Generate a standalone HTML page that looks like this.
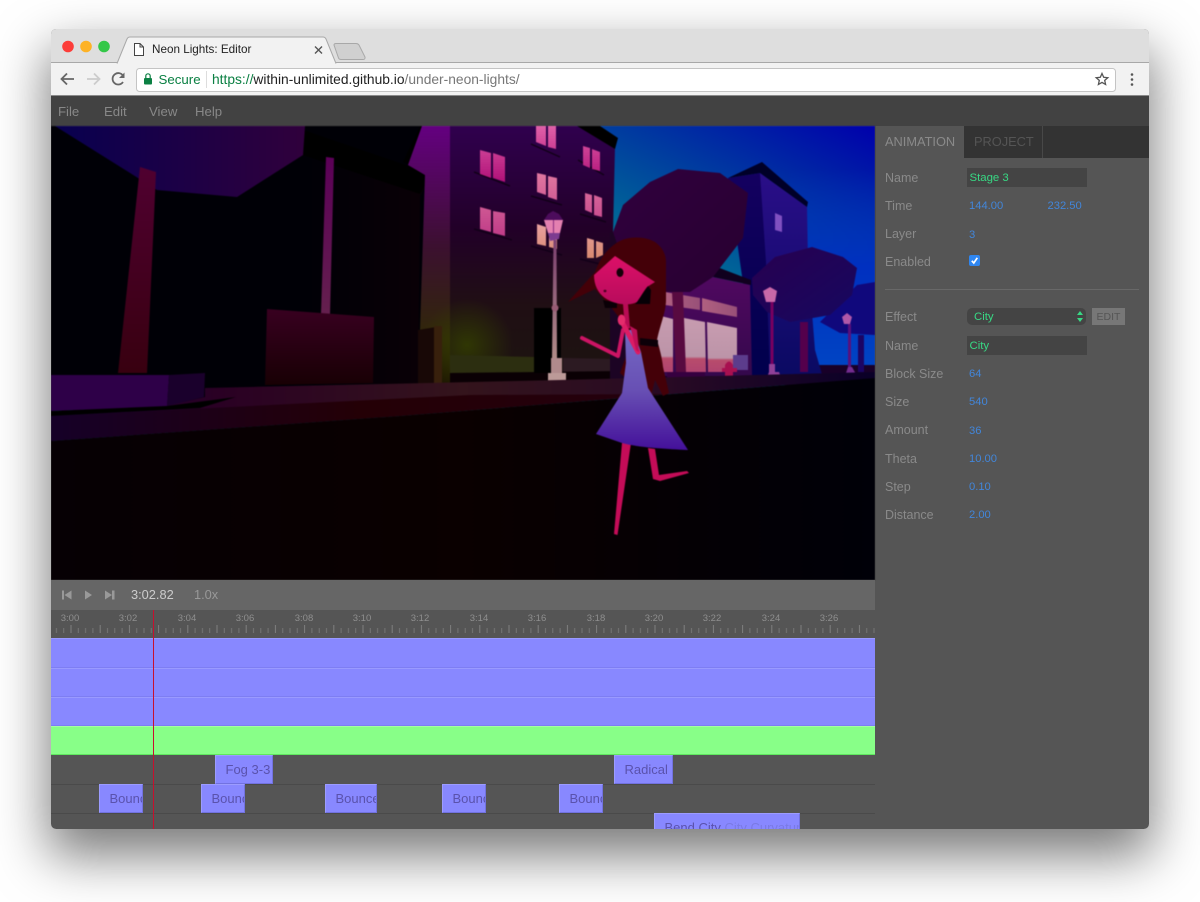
<!DOCTYPE html>
<html><head><meta charset="utf-8"><title>Neon Lights: Editor</title>
<style>
html,body{margin:0;padding:0;background:#fff;width:1200px;height:902px;overflow:hidden}
*{box-sizing:border-box}
body{font-family:"Liberation Sans",sans-serif}
#win{position:absolute;left:51px;top:29px;width:1098px;height:800px;border-radius:5px;box-shadow:0 24px 52px 3px rgba(0,0,0,.52)}
#clip{position:absolute;inset:0;border-radius:5px;overflow:hidden;background:#555}
.a{position:absolute;white-space:nowrap}
.lb{position:absolute;left:834px;color:#8a8a8a;font-size:12.5px;line-height:16px;margin-top:1px}
.v{position:absolute;color:#4286da;font-size:11.2px;line-height:14px;margin-top:1px}
.inp{position:absolute;left:916px;width:120px;height:19px;background:#444;color:#38d884;font-size:11.4px;line-height:21px;padding-left:2.500px}
.clip{position:absolute;background:#8888ff;border:1px solid;border-color:#9c9cff #7272e0 #7272e0 #9c9cff;color:#5a52ac;font-size:13px;line-height:27px;padding-left:9.500px;overflow:hidden;white-space:nowrap}
.t{position:absolute;left:0;width:824px;background:#8888ff;border-top:1px solid #9a9aff;border-bottom:1px solid #7e7ef2}
.rl{position:absolute;top:584px;width:30px;text-align:center;color:#8f8f8f;font-size:9.5px;line-height:12px}
</style></head><body>
<div id="win"><div id="clip">
<!-- tab strip -->
<div class="a" style="left:0;top:0;width:1098px;height:34px;background:#dedede;border-bottom:1px solid #a8a8a8"></div>
<div class="a" style="left:0;top:34px;width:1098px;height:33px;background:#f2f2f2;border-bottom:1px solid #8a8a8a"></div>
<svg class="a" style="left:0;top:0" width="1098" height="67" viewBox="51 29 1098 67">
<circle cx="68" cy="46.5" r="5.8" fill="#fc3d39"/><circle cx="86" cy="46.5" r="5.8" fill="#fdb225"/><circle cx="104" cy="46.5" r="5.8" fill="#33c748"/>
<path d="M117 63.5 127 39Q128 37 130 37H323Q325 37 326 39L336 63.5" fill="#f2f2f2" stroke="#a8a8a8"/>
<path d="M334 45Q334 43.500 336 43.500H356Q358 43.500 359 45L365 57Q365.500 59.500 363 59.500H341Q339 59.500 338.500 58Z" fill="#d0d0d0" stroke="#a8a8a8"/>
<path d="M134.500 43.500H140L143.500 47V55.500H134.500Z M140 43.500V47H143.500" fill="#fff" stroke="#444" stroke-width="1"/>
<path d="M315 46.500 322 53.500M322 46.500 315 53.500" stroke="#555" stroke-width="1.400"/>
<path d="M74 79H62M67 73.500 61.500 79 67 84.500" fill="none" stroke="#666" stroke-width="1.800"/>
<path d="M87 79H99M94 73.500 99.500 79 94 84.500" fill="none" stroke="#ccc" stroke-width="1.800"/>
<path d="M123 82A5.700 5.700 0 1 1 123.500 76.500" fill="none" stroke="#666" stroke-width="1.800"/><path d="M124.500 72.500V78H119Z" fill="#666"/>
<rect x="136.500" y="68.500" width="979" height="23" rx="3" fill="#fff" stroke="#c4c4c4"/>
<rect x="144" y="78" width="8" height="6.500" rx="1" fill="#0b8043"/><path d="M145.800 78V76A2.200 2.200 0 0 1 150.200 76V78" fill="none" stroke="#0b8043" stroke-width="1.200"/>
<rect x="206" y="71" width="1" height="17" fill="#ddd"/>
<path d="M1102 73.500 1103.700 77.300 1107.800 77.700 1104.700 80.400 1105.600 84.500 1102 82.400 1098.400 84.500 1099.300 80.400 1096.200 77.700 1100.300 77.300Z" fill="none" stroke="#555" stroke-width="1.300"/>
<circle cx="1132" cy="74.500" r="1.300" fill="#555"/><circle cx="1132" cy="79.500" r="1.300" fill="#555"/><circle cx="1132" cy="84.500" r="1.300" fill="#555"/>
</svg>
<div class="a" style="left:101px;top:13px;font-size:11.700px;line-height:16px;color:#222">Neon Lights: Editor</div>
<div class="a" style="left:107.500px;top:42px;font-size:13.300px;line-height:17px;color:#0b8043">Secure</div>
<div class="a" style="left:161px;top:42px;font-size:13.800px;line-height:17px;color:#777"><span style="color:#0b8043">https://</span><span style="color:#222">within-unlimited.github.io</span>/under-neon-lights/</div>
<!-- menu -->
<div class="a" style="left:0;top:67px;width:1098px;height:30px;background:#424242"></div>
<div class="a" style="left:7px;top:74px;font-size:13.200px;line-height:17px;color:#888">File</div>
<div class="a" style="left:53px;top:74px;font-size:13.200px;line-height:17px;color:#888">Edit</div>
<div class="a" style="left:98px;top:74px;font-size:13.200px;line-height:17px;color:#888">View</div>
<div class="a" style="left:144px;top:74px;font-size:13.200px;line-height:17px;color:#888">Help</div>
<!-- scene -->
<svg class="a" style="left:0;top:97px;filter:blur(.45px)" width="824" height="454" viewBox="51 126 824 454">
<defs>
<linearGradient id="sky" gradientUnits="userSpaceOnUse" x1="875" y1="126" x2="783" y2="311"><stop offset="0" stop-color="#0000ac"/><stop offset=".55" stop-color="#003aa0"/><stop offset="1" stop-color="#006a96"/></linearGradient>
<linearGradient id="sky2" x1="0" y1="0" x2="0" y2="1"><stop offset="0" stop-color="#0030c0" stop-opacity="0"/><stop offset=".45" stop-color="#0030c0"/><stop offset="1" stop-color="#0048c4"/></linearGradient>
<linearGradient id="can" x1="0" y1="0" x2="1" y2="0"><stop offset="0" stop-color="#080050"/><stop offset="1" stop-color="#30003c"/></linearGradient>
<linearGradient id="tr1" x1="0" y1="0" x2="0" y2="1"><stop offset="0" stop-color="#500030"/><stop offset="1" stop-color="#380010"/></linearGradient>
<linearGradient id="tr2" x1="0" y1="0" x2="0" y2="1"><stop offset="0" stop-color="#5c0058"/><stop offset="1" stop-color="#64204e"/></linearGradient>
<linearGradient id="bx" x1="0" y1="0" x2="0" y2="1"><stop offset="0" stop-color="#380020"/><stop offset="1" stop-color="#180004"/></linearGradient>
<linearGradient id="dk" x1="0" y1="0" x2="1" y2="0"><stop offset="0" stop-color="#000006"/><stop offset="1" stop-color="#0a0006"/></linearGradient>
<linearGradient id="side" gradientUnits="userSpaceOnUse" x1="51" y1="0" x2="875" y2="0"><stop offset="0" stop-color="#1c0040"/><stop offset=".2" stop-color="#2a0024"/><stop offset=".5" stop-color="#34141c"/><stop offset=".75" stop-color="#280a24"/><stop offset="1" stop-color="#0a0028"/></linearGradient>
<linearGradient id="band" gradientUnits="userSpaceOnUse" x1="51" y1="0" x2="670" y2="0"><stop offset="0" stop-color="#160028"/><stop offset=".5" stop-color="#240006"/><stop offset="1" stop-color="#24000e"/></linearGradient>
<linearGradient id="road" gradientUnits="userSpaceOnUse" x1="51" y1="0" x2="875" y2="0"><stop offset="0" stop-color="#060004"/><stop offset=".5" stop-color="#0a0000"/><stop offset="1" stop-color="#000008"/></linearGradient>
<linearGradient id="bl" x1="0" y1="0" x2="0" y2="1"><stop offset="0" stop-color="#640080"/><stop offset=".45" stop-color="#3c1030"/><stop offset=".8" stop-color="#302808"/><stop offset="1" stop-color="#1a1400"/></linearGradient>
<linearGradient id="bf" x1="0" y1="0" x2="0" y2="1"><stop offset="0" stop-color="#30004e"/><stop offset=".4" stop-color="#220028"/><stop offset=".7" stop-color="#200f14"/><stop offset="1" stop-color="#1c1410"/></linearGradient>
<linearGradient id="w1" x1="0" y1="0" x2="0" y2="1"><stop offset="0" stop-color="#e060a8"/><stop offset="1" stop-color="#b01078"/></linearGradient>
<linearGradient id="w2" x1="0" y1="0" x2="0" y2="1"><stop offset="0" stop-color="#e8a0a0"/><stop offset="1" stop-color="#d88a70"/></linearGradient>
<linearGradient id="w3" x1="0" y1="0" x2="0" y2="1"><stop offset="0" stop-color="#e078a0"/><stop offset="1" stop-color="#c03c88"/></linearGradient>
<radialGradient id="glow"><stop offset="0" stop-color="#344000" stop-opacity=".8"/><stop offset="1" stop-color="#344000" stop-opacity="0"/></radialGradient>
<linearGradient id="tree" x1="0" y1="0" x2="1" y2="1"><stop offset="0" stop-color="#30003e"/><stop offset="1" stop-color="#280030"/></linearGradient>
<linearGradient id="tree2" x1="0" y1="0" x2="1" y2="1"><stop offset="0" stop-color="#280050"/><stop offset="1" stop-color="#160860"/></linearGradient>
<linearGradient id="rb" x1="0" y1="0" x2="0" y2="1"><stop offset="0" stop-color="#2a0e88"/><stop offset="1" stop-color="#0a0a62"/></linearGradient>
<linearGradient id="rl" x1="0" y1="0" x2="0" y2="1"><stop offset="0" stop-color="#140060"/><stop offset="1" stop-color="#00004c"/></linearGradient>
<linearGradient id="shop" x1="0" y1="0" x2="0" y2="1"><stop offset="0" stop-color="#500860"/><stop offset="1" stop-color="#34084c"/></linearGradient>
<linearGradient id="sw" x1="0" y1="0" x2="0" y2="1"><stop offset="0" stop-color="#c89cb0"/><stop offset=".72" stop-color="#bc94a8"/><stop offset=".76" stop-color="#b84c6c"/><stop offset="1" stop-color="#b04470"/></linearGradient>
<linearGradient id="sw2" x1="0" y1="0" x2="1" y2="0"><stop offset="0" stop-color="#b06080"/><stop offset="1" stop-color="#985078"/></linearGradient>
<linearGradient id="pole" x1="0" y1="0" x2="0" y2="1"><stop offset="0" stop-color="#7c4070"/><stop offset="1" stop-color="#b08c88"/></linearGradient>
<linearGradient id="dress" x1="0" y1="0" x2="0" y2="1"><stop offset="0" stop-color="#7468c4"/><stop offset=".5" stop-color="#6850b4"/><stop offset="1" stop-color="#44109a"/></linearGradient>
<linearGradient id="skin" x1="0" y1="0" x2="0" y2="1"><stop offset="0" stop-color="#dc1068"/><stop offset="1" stop-color="#b80c5c"/></linearGradient>
</defs>
<rect x="51" y="126" width="824" height="454" fill="url(#sky)"/>
<rect x="790" y="170" width="85" height="215" fill="url(#sky2)"/>
<rect x="300" y="126" width="130" height="50" fill="#003ca4"/>
<!-- left dark building -->
<rect x="51" y="126" width="390" height="280" fill="#000006"/>
<path d="M303 130 426 172V184L420 196 418 385H303Z" fill="url(#dk)"/>
<path d="M303 130 426 172V184L420 194 303 155Z" fill="#000"/>
<path d="M55 126H305L303 155 237 197 157 190 138 178Z" fill="url(#can)"/>
<path d="M140 167 156 172 147 373H118Z" fill="url(#tr1)"/>
<path d="M326 157 334 158 330 314H321Z" fill="url(#tr2)"/>
<path d="M267 309 374 317 373 383 265 385Z" fill="url(#bx)"/>
<!-- main building -->
<path d="M403 162 420 126H429L410 165Z" fill="#000"/>
<path d="M422 126 408 165 425 175 418 392H450V126Z" fill="url(#bl)"/>
<path d="M450 126H577L615 147 613 232 620 372 450 382Z" fill="url(#bf)"/>
<path d="M577 126H600L618 138 615 149Z" fill="#000"/>
<ellipse cx="467" cy="345" rx="46" ry="46" fill="url(#glow)"/>
<path d="M450 355 535 357V373H450Z" fill="#2c2e10"/>
<path d="M563 358 622 359V372H563Z" fill="#2c1a22"/>
<path d="M450 373 620 371V392H450Z" fill="#0a0004"/>
<path d="M418 330 442 326V388H418Z" fill="#180806"/><path d="M434 326H442V388H434Z" fill="#38200c"/>
<path d="M534 308H561V373H534Z" fill="#000"/>
<g fill="none" stroke="#120018" stroke-width="1.500">
<path d="M474 172 510 186M531 144 560 157M578 160 604 175M531 196 562 205M580 214 606 222M474 229 512 240M531 246 562 255M580 259 600 264"/>
</g>
<path d="M480 150 491 153V178L480 174ZM493 153 505 157V182L493 178ZM536 126H546V146L536 142ZM548 126H556V149L548 147ZM583 146 590 148V168L583 165ZM592 149 600 152V171L592 169Z" fill="url(#w1)"/>
<path d="M537 173 546 175V195L537 192ZM548 176 557 178V200L548 197ZM585 193 592 195V213L585 210ZM594 195 602 198V217L594 215ZM480 207 491 210V232L480 229ZM493 211 505 213V236L493 233Z" fill="url(#w3)"/>
<path d="M537 224 546 227V246L537 244ZM549 228 557 230V249L549 247ZM587 238 594 240V258L587 258ZM596 241 603 243V255L596 258Z" fill="url(#w2)"/>
<!-- fill behind girl and shop -->
<path d="M610 232H670V385H610Z" fill="#1c0424"/>
<path d="M640 365H875V385H640Z" fill="#180028"/>
<!-- right building + trees behind -->
<path d="M728 178 760 173 775 262V378H740L744 290Z" fill="url(#rl)"/>
<path d="M760 173 807 207 808 262 815 350 823 378H770L766 262Z" fill="url(#rb)"/>
<path d="M728 178 762 162 808 202 807 207 760 173Z" fill="#000028"/>
<path d="M775 213 782 216V232L775 230Z" fill="#8050c0"/>
<path d="M820 322 857 285 875 282V335L840 333Z" fill="#10087c"/>
<rect x="858" y="335" width="6" height="37" fill="#1c0464"/>
<rect x="800" y="322" width="8" height="50" fill="#54004c"/>
<path d="M752 278 775 257 812 247 843 257 857 268 852 295 830 315 790 322 767 312 753 295Z" fill="url(#tree2)"/>
<!-- shop -->
<path d="M690 290 713 277 750 285 752 376 650 376 665 292Z" fill="url(#shop)"/>
<path d="M717 267 751 280V285L713 277Z" fill="#10001e"/>
<path d="M665 292 700 298V310L665 305Z" fill="url(#sw2)"/><path d="M702 298 737 307V317L702 311Z" fill="url(#sw2)"/>
<path d="M657 315 673 319V372H650Z" fill="url(#sw)"/><path d="M679 317 705 322 706 372H679Z" fill="url(#sw)"/><path d="M707 322 737 328V372H708Z" fill="url(#sw)"/>
<path d="M613 232 623 205 650 182 678 169 720 173 748 193 743 238 713 277 690 292 663 292 630 280Z" fill="url(#tree)"/>
<path d="M672 292H683L686 372H676Z" fill="#580a40"/>
<rect x="667" y="372" width="38" height="11" fill="#360040"/>
<rect x="733" y="355" width="15" height="15" fill="#5c3c8c"/>
<path d="M725 365Q729 358 733 365V368H737V372H733V382H725V372H722V368H725Z" fill="#a81050"/>
<!-- lamps -->
<path d="M553.500 240H556.500L557 358H552Z" fill="url(#pole)"/><circle cx="555" cy="308" r="3.500" fill="#985c74"/>
<path d="M551 358H562V373H551Z" fill="#b08a8c"/><path d="M548 373H566V389H548Z" fill="#bc9a98"/>
<path d="M544 220 548 214 553 211 559 214 563 220Z" fill="#4c0c5c"/><path d="M544 220H563L560 233H548Z" fill="#e480b0"/><path d="M553.500 220V233" stroke="#8a2c80"/><path d="M548 233H560L559 239 550 241Z" fill="#7c3c90"/>
<rect x="770.500" y="302" width="3" height="62" fill="#780060"/><path d="M769 364H775V372H779L782 380H766L769 372Z" fill="#904098"/>
<path d="M763 291 770 287 777 291 775 302H766Z" fill="#c868a8"/>
<rect x="848" y="324" width="3" height="44" fill="#58107c"/><path d="M848 367H852L857 376H845Z" fill="#742c90"/>
<path d="M842 317 847 313 852 317 850 324H844Z" fill="#b058a8"/>
<!-- ground -->
<path d="M205 388 560 380 875 372V378L660 395 400 416 51 441V412L170 405 205 397Z" fill="url(#side)"/>
<path d="M51 416 470 395 670 394 400 416 51 441Z" fill="url(#band)"/>
<path d="M51 441 400 416 660 395 875 378V580H51Z" fill="url(#road)"/>
<path d="M51 375H169L167 407 51 411Z" fill="#2e0048"/>
<path d="M169 375 205 373 204 397 167 406Z" fill="#1a002c"/>
<path d="M51 411 167 406 236 397 200 408 51 416Z" fill="#000"/>
<!-- girl -->
<path d="M568 302 595 272C600 258 608 248 618 242 628 236 645 236 655 242 662 247 666 254 666 262V300C666 312 660 325 657 340 660 350 662 358 663 367L669 393 663 396 655 380 650 400 620 373 632 340 625 325 610 306 595 289Z" fill="#440008"/>
<path d="M622 443H631L617.500 535 614 534Z" fill="#c40c58"/>
<path d="M648 448 655 449 659 475 687 471 689 473 660 481 653 479Z" fill="#c40c58"/>
<path d="M625 330 633 330 641 352 648 388 688 450C670 449 640 448 622 443L596 434 622 393 626 363Z" fill="url(#dress)"/>
<path d="M582 338 618 356 623 330" fill="none" stroke="#cc1464" stroke-width="4" stroke-linejoin="round" stroke-linecap="round"/>
<path d="M628 304 630 328 625 330 623 304Z" fill="#b80c54"/>
<path d="M622 322 638 352" stroke="#dc1c64" stroke-width="5" stroke-linecap="round"/>
<path d="M630 326 637 330 639 352 636 350Z" fill="#c01058"/>
<ellipse cx="621.500" cy="320" rx="3.800" ry="5.500" fill="#e42c6c"/>
<path d="M640 338 658 340V347L640 345Z" fill="#0c0008"/>
<path d="M603 300 617 303 617 308 605 308Z" fill="#0a0006"/>
<path d="M615 256 655 282 647 287C643 292 640 298 637 302 630 306 615 305 605 298 598 293 594 285 594 275Z" fill="url(#skin)"/>
<path d="M648 286 651 290 650 304H635L637 302Z" fill="#060006"/>
<ellipse cx="620" cy="272.500" rx="3.500" ry="4.500" fill="#150008"/>
<ellipse cx="605" cy="291" rx="1.500" ry="1.200" fill="#4a0020"/>
</svg>
<!-- right panel -->
<div class="a" style="left:824px;top:97px;width:1px;height:454px;background:#4a4a4a"></div>
<div class="a" style="left:825px;top:97px;width:273px;height:32px;background:#333"></div>
<div class="a" style="left:825px;top:97px;width:88px;height:32px;background:#555"></div>
<div class="a" style="left:991px;top:97px;width:1px;height:32px;background:#484848"></div>
<div class="a" style="left:834px;top:105px;font-size:12.800px;line-height:16px;color:#8a8a8a">ANIMATION</div>
<div class="a" style="left:923px;top:105px;font-size:12.800px;line-height:16px;color:#555">PROJECT</div>
<div class="lb" style="top:140px">Name</div><div class="inp" style="top:139px">Stage 3</div>
<div class="lb" style="top:168px">Time</div><div class="v" style="left:918px;top:168.500px">144.00</div><div class="v" style="left:996.500px;top:168.500px">232.50</div>
<div class="lb" style="top:196px">Layer</div><div class="v" style="left:918px;top:197.500px">3</div>
<div class="lb" style="top:224px">Enabled</div>
<svg class="a" style="left:918px;top:226px" width="12" height="12"><rect width="11" height="11" rx="2" fill="#2f86f0"/><path d="M2.800 5.800 4.800 8 8.300 2.800" fill="none" stroke="#fff" stroke-width="1.700"/></svg>
<div class="a" style="left:834px;top:260px;width:254px;height:1px;background:#686868"></div>
<div class="lb" style="top:279px">Effect</div>
<div class="a" style="left:916px;top:279px;width:119px;height:17px;border-radius:5px;background:#444;color:#38d884;font-size:11.400px;line-height:19px;padding-left:7px">City</div>
<svg class="a" style="left:1025px;top:282px" width="8" height="11"><path d="M4 0 7 4H1ZM4 11 1 7H7Z" fill="#38d884"/></svg>
<div class="a" style="left:1041px;top:279px;width:33px;height:17px;background:#777;color:#555;font-size:10.500px;line-height:19px;text-align:center">EDIT</div>
<div class="lb" style="top:308px">Name</div><div class="inp" style="top:307px">City</div>
<div class="lb" style="top:336px">Block Size</div><div class="v" style="left:918px;top:337px">64</div>
<div class="lb" style="top:364px">Size</div><div class="v" style="left:918px;top:365px">540</div>
<div class="lb" style="top:392px">Amount</div><div class="v" style="left:918px;top:394px">36</div>
<div class="lb" style="top:421px">Theta</div><div class="v" style="left:918px;top:422px">10.00</div>
<div class="lb" style="top:449px">Step</div><div class="v" style="left:918px;top:450px">0.10</div>
<div class="lb" style="top:477px">Distance</div><div class="v" style="left:918px;top:478px">2.00</div>
<!-- controls -->
<div class="a" style="left:0;top:551px;width:824px;height:30px;background:#666"></div>
<svg class="a" style="left:0;top:551px" width="80" height="30"><path d="M11 10.500H13V19.500H11ZM20.500 10.500V19.500L13.500 15Z" fill="#999"/><path d="M34 10.500 41 15 34 19.500Z" fill="#999"/><path d="M54 10.500 61 15 54 19.500ZM61 10.500H63.500V19.500H61Z" fill="#999"/></svg>
<div class="a" style="left:80px;top:558px;font-size:12.800px;line-height:16px;color:#ccc">3:02.82</div>
<div class="a" style="left:143px;top:558px;font-size:12.800px;line-height:16px;color:#999">1.0x</div>
<!-- ruler -->
<div class="a" style="left:0;top:581px;width:824px;height:28px;background:#555"></div>
<div class="rl" style="left:4px">3:00</div><div class="rl" style="left:62px">3:02</div><div class="rl" style="left:121px">3:04</div><div class="rl" style="left:179px">3:06</div><div class="rl" style="left:238px">3:08</div><div class="rl" style="left:296px">3:10</div><div class="rl" style="left:354px">3:12</div><div class="rl" style="left:413px">3:14</div><div class="rl" style="left:471px">3:16</div><div class="rl" style="left:530px">3:18</div><div class="rl" style="left:588px">3:20</div><div class="rl" style="left:646px">3:22</div><div class="rl" style="left:705px">3:24</div><div class="rl" style="left:763px">3:26</div>
<svg class="a" style="left:0;top:581px" width="824" height="28"><defs><pattern id="tk" patternUnits="userSpaceOnUse" x="19.500" y="0" width="29.200" height="28"><rect x="0" y="15" width="1" height="8" fill="#7e7e7e"/><rect x="7.300" y="18" width="1" height="5" fill="#757575"/><rect x="14.600" y="18" width="1" height="5" fill="#757575"/><rect x="21.900" y="18" width="1" height="5" fill="#757575"/></pattern></defs><rect width="824" height="28" fill="url(#tk)"/></svg>
<!-- tracks -->
<div class="t" style="top:609px;height:30px"></div>
<div class="t" style="top:639px;height:29px"></div>
<div class="t" style="top:668px;height:29px"></div>
<div class="a" style="left:0;top:697px;width:824px;height:29px;background:#88ff88;border-top:1px solid #a4ffa4;border-bottom:1px solid #5ee85e"></div>
<div class="a" style="left:0;top:755px;width:824px;height:1px;background:#4a4a4a"></div>
<div class="a" style="left:0;top:784px;width:824px;height:1px;background:#4a4a4a"></div>
<div class="clip" style="left:164px;top:726px;width:58px;height:29px">Fog 3-3</div>
<div class="clip" style="left:563px;top:726px;width:59px;height:29px">Radical</div>
<div class="clip" style="left:48px;top:755px;width:44px;height:29px">Bounce</div>
<div class="clip" style="left:150px;top:755px;width:44px;height:29px">Bounce</div>
<div class="clip" style="left:274px;top:755px;width:52px;height:29px">Bounce</div>
<div class="clip" style="left:391px;top:755px;width:44px;height:29px">Bounce</div>
<div class="clip" style="left:508px;top:755px;width:44px;height:29px">Bounce</div>
<div class="clip" style="left:603px;top:784px;width:146px;height:29px">Bend City <span style="color:#7a7ae4">City Curvature</span></div>
<!-- playhead -->
<div class="a" style="left:102px;top:581px;width:1px;height:219px;background:#c8102e"></div>
</div></div>
</body></html>
